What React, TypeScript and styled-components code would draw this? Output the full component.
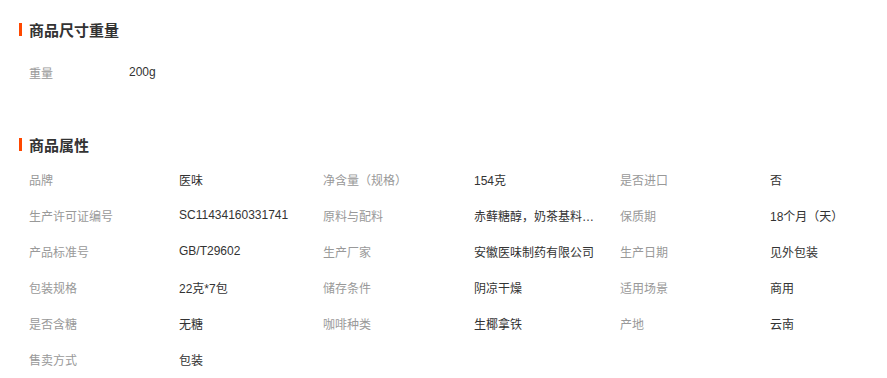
import React from "react";
import styled, { createGlobalStyle } from "styled-components";

const GlobalStyle = createGlobalStyle`
  html, body {
    margin: 0;
    padding: 0;
    background: #fff;
  }
  body {
    font-family: "Liberation Sans", "Noto Sans CJK SC", sans-serif;
    font-size: 12px;
    color: #333;
  }
`;

const Page = styled.div`
  width: 887px;
  height: 378px;
  overflow: hidden;
  padding: 19px 0 0 19px;
  box-sizing: border-box;
`;

const Section = styled.section<{ $gap?: number }>`
  margin-top: ${(p) => p.$gap || 0}px;
`;

const Title = styled.h3`
  display: flex;
  align-items: center;
  height: 20px;
  margin: 0;
  font-size: 15px;
  font-weight: 700;
  color: #333;

  &::before {
    content: "";
    width: 3px;
    height: 13px;
    margin-right: 7px;
    background: #ff4800;
  }
`;

const SizeList = styled.div`
  display: grid;
  grid-template-columns: 100px 1fr;
  grid-auto-rows: 36px;
  align-items: center;
  margin-top: 15px;
  padding-left: 10px;
`;

const AttrGrid = styled.div`
  display: grid;
  grid-template-columns: 150px 144px 151px 146px 150px 1fr;
  grid-auto-rows: 36px;
  align-items: center;
  margin-top: 7px;
  padding-left: 10px;
`;

const Label = styled.div`
  color: #999;
  white-space: nowrap;
`;

const Value = styled.div`
  color: #333;
  max-width: 122px;
  white-space: nowrap;
  overflow: hidden;
  text-overflow: ellipsis;
`;

const attrs: [string, string][] = [
  ["品牌", "医味"],
  ["净含量（规格）", "154克"],
  ["是否进口", "否"],
  ["生产许可证编号", "SC11434160331741"],
  ["原料与配料", "赤藓糖醇，奶茶基料，咖啡粉"],
  ["保质期", "18个月（天）"],
  ["产品标准号", "GB/T29602"],
  ["生产厂家", "安徽医味制药有限公司"],
  ["生产日期", "见外包装"],
  ["包装规格", "22克*7包"],
  ["储存条件", "阴凉干燥"],
  ["适用场景", "商用"],
  ["是否含糖", "无糖"],
  ["咖啡种类", "生椰拿铁"],
  ["产地", "云南"],
  ["售卖方式", "包装"],
];

export default function App() {
  return (
    <>
      <GlobalStyle />
      <Page>
        <Section>
          <Title>商品尺寸重量</Title>
          <SizeList>
            <Label>重量</Label>
            <Value>200g</Value>
          </SizeList>
        </Section>
        <Section $gap={44}>
          <Title>商品属性</Title>
          <AttrGrid>
            {attrs.map(([k, v]) => (
              <React.Fragment key={k}>
                <Label>{k}</Label>
                <Value>{v}</Value>
              </React.Fragment>
            ))}
          </AttrGrid>
        </Section>
      </Page>
    </>
  );
}
